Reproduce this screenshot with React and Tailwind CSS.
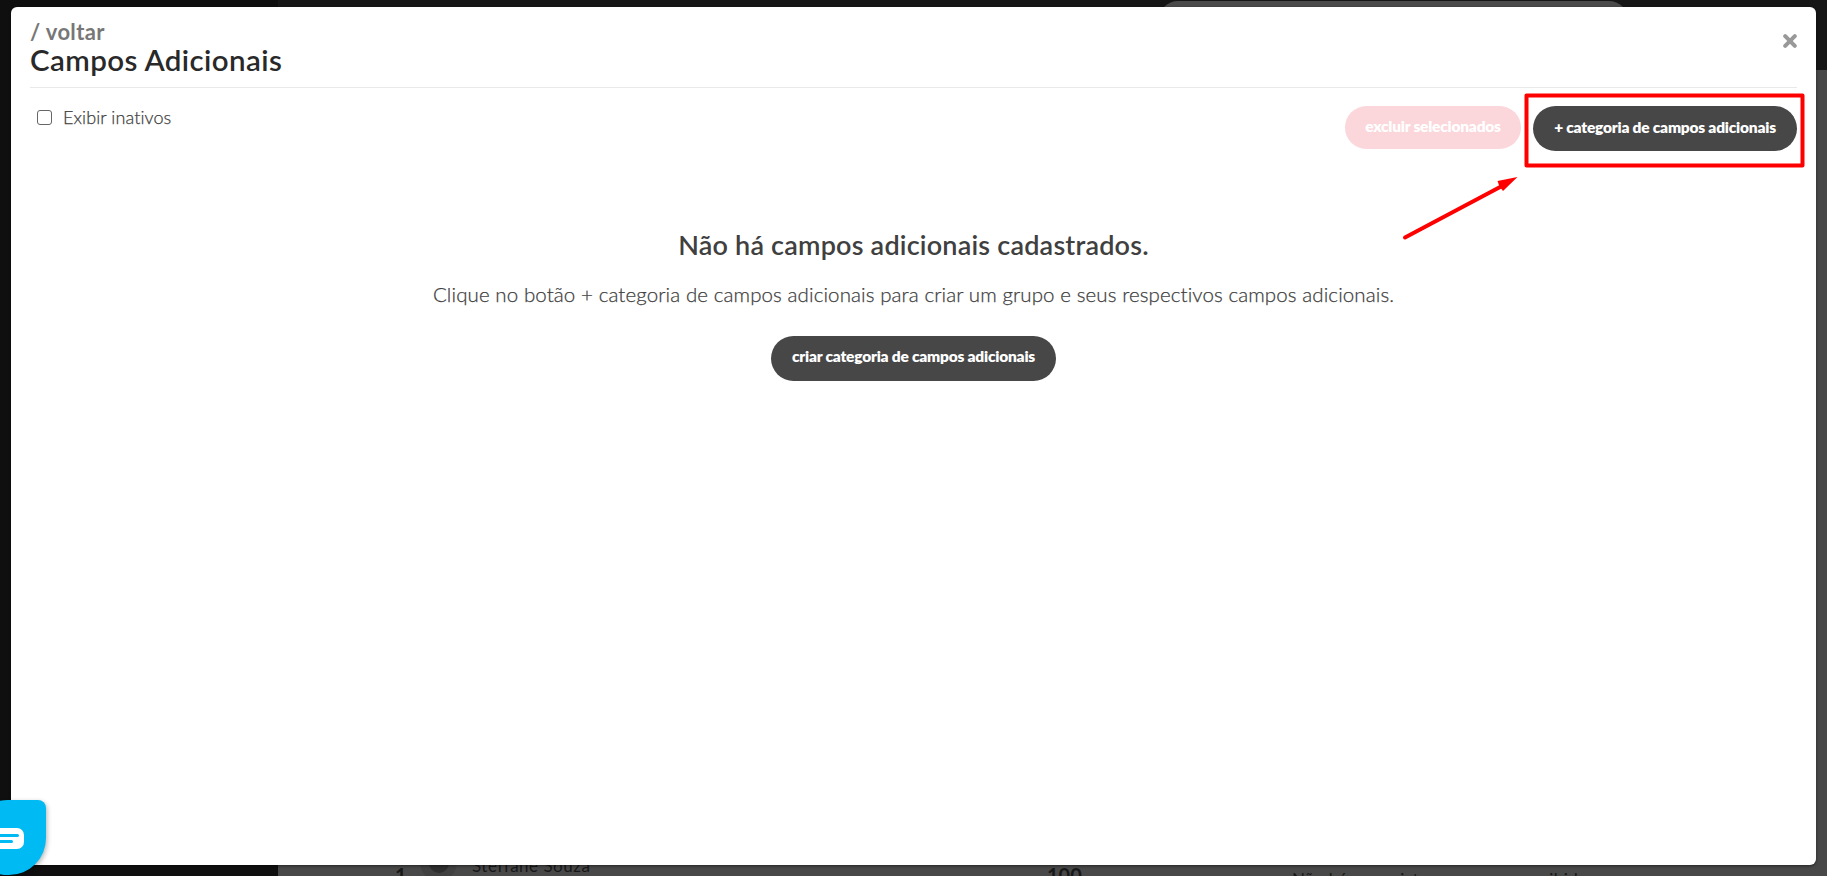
import React, { useState } from "react";

/**
 * Botão em formato de pílula.
 * @param {{ className: string, children: React.ReactNode }} props
 */
function PillButton({ className, children, ...props }) {
  return (
    <button
      className={`flex shrink-0 justify-center whitespace-nowrap rounded-full text-[15.5px] font-extrabold leading-[22px] tracking-[-0.22px] text-white ${className}`}
      {...props}
    >
      {children}
    </button>
  );
}

function CloseIcon() {
  return (
    <svg className="h-3.5 w-3.5" viewBox="0 0 14 14" stroke="#999999" strokeWidth="4" strokeLinecap="round">
      <path d="M2.2 2.2l9.6 9.6M11.8 2.2l-9.6 9.6" />
    </svg>
  );
}

/** Página por trás do modal, já escurecida. */
function Backdrop() {
  return (
    <div className="absolute inset-0 flex">
      <div className="w-[278px] shrink-0 bg-[#0f0f0f]" />
      <div className="flex min-w-0 flex-1 flex-col bg-[#484848]">
        <div className="h-[70px] shrink-0 bg-[#161616] pl-[881px] pt-px">
          <div className="h-[38px] w-[469px] rounded-full bg-[#4b4a4b]" />
        </div>
        <div className="mt-auto flex h-5 items-start overflow-hidden text-lg leading-5 text-[#171717]">
          <span className="ml-[117px] mt-[9px] w-3 shrink-0 text-xl font-bold leading-5">1</span>
          <span className="-mt-3 ml-[13px] flex h-[37px] w-[37px] shrink-0 justify-center rounded-full bg-[#404040]">
            <span className="mt-1 h-[25px] w-5 rounded-full bg-[#2d2d2d]" />
          </span>
          <span className="ml-[15px] w-[575px] shrink-0 whitespace-nowrap text-[17px] tracking-[0.5px]">
            Steffane Souza
          </span>
          <span className="mt-[9px] w-[245px] shrink-0 text-xl font-bold leading-5">100</span>
          <span className="mt-[14px] whitespace-nowrap text-[17px] leading-5 tracking-[0.4px]">
            Não há conquistas para serem exibidas
          </span>
        </div>
      </div>
    </div>
  );
}

/** Destaque vermelho e seta apontando para o botão de categoria. */
function Highlight() {
  return (
    <svg className="pointer-events-none absolute left-[1395px] top-[85px]" width="415" height="160" viewBox="1395 85 415 160">
      <rect x="1526.5" y="95.5" width="276" height="70" fill="none" stroke="#ff0000" strokeWidth="4" strokeLinejoin="round" />
      <path d="M1405 237.5L1502 186" stroke="#ff0000" strokeWidth="4" strokeLinecap="round" />
      <path d="M1517.500 177L1497.500 181L1499.500 186.500L1503 191Z" fill="#ff0000" />
    </svg>
  );
}

function ChatWidget() {
  return (
    <button
      aria-label="Chat"
      className="absolute -left-[29px] top-[800px] flex h-[75px] w-[75px] items-center justify-center rounded-[37px] rounded-tr-[8px] bg-[#00baf4] pt-0.5 shadow-[1px_2px_5px_rgba(0,0,0,0.3)]"
    >
      <svg width="31" height="21" viewBox="0 0 31 21" fill="none">
        <rect width="31" height="21" rx="7" fill="#ffffff" />
        <path d="M7 7.500h17.500M7 13.500h11.500" stroke="#00baf4" strokeWidth="3" strokeLinecap="round" />
      </svg>
    </button>
  );
}

export default function App() {
  const [showInactive, setShowInactive] = useState(false);

  return (
    <div className="relative h-[876px] w-[1827px] overflow-hidden font-['Lato',sans-serif]">
      <Backdrop />

      <div className="relative ml-[11px] pt-[7px]">
        <main className="h-[858px] w-[1805px] rounded-md bg-white px-[19px] shadow-[0_1px_3px_rgba(0,0,0,0.5)]">
          {/* Cabeçalho */}
          <header className="flex h-[81px] items-start justify-between border-b border-[#e9e9e9] pt-[13px]">
            <div>
              <a href="#" className="block text-[22px] font-bold leading-6 tracking-[0.35px] text-[#777777]">
                / voltar
              </a>
              <h1 className="-mt-px text-[29.5px] font-semibold leading-[34px] tracking-[0.4px] text-[#292929]">
                Campos Adicionais
              </h1>
            </div>
            <button aria-label="Fechar" className="mt-[14px]">
              <CloseIcon />
            </button>
          </header>

          {/* Filtro e ações */}
          <div className="flex items-start justify-between pt-[18px]">
            <label className="-mt-px flex items-center gap-[11px] pl-[7px] text-[18px] font-light leading-[24px] tracking-[0.1px] text-[#404040] [-webkit-text-stroke:0.25px]">
              <input
                type="checkbox"
                checked={showInactive}
                onChange={(e) => setShowInactive(e.target.checked)}
                className="h-[15px] w-[15px] appearance-none rounded-[3px] border border-[#666666] checked:bg-[#474747]"
              />
              Exibir inativos
            </label>
            <div className="flex gap-3">
              <PillButton disabled className="h-[43px] w-[176px] bg-[#fbd6da] pt-[9px]">
                excluir selecionados
              </PillButton>
              <PillButton className="h-[45px] w-[264px] bg-[#474747] pt-[10px]">
                + categoria de campos adicionais
              </PillButton>
            </div>
          </div>

          {/* Estado vazio */}
          <section className="flex flex-col items-center pt-[76px] text-[#404040]">
            <h2 className="text-[27px] font-semibold leading-9 tracking-[0.2px]">
              Não há campos adicionais cadastrados.
            </h2>
            <p className="mt-[17px] text-[20.5px] font-light leading-7 tracking-[0.1px] [-webkit-text-stroke:0.25px]">
              Clique no botão + categoria de campos adicionais para criar um grupo e seus respectivos campos adicionais.
            </p>
            <PillButton className="mt-[28px] h-[45px] w-[285px] bg-[#474747] pt-[9px]">
              criar categoria de campos adicionais
            </PillButton>
          </section>
        </main>
      </div>

      <Highlight />
      <ChatWidget />
    </div>
  );
}
